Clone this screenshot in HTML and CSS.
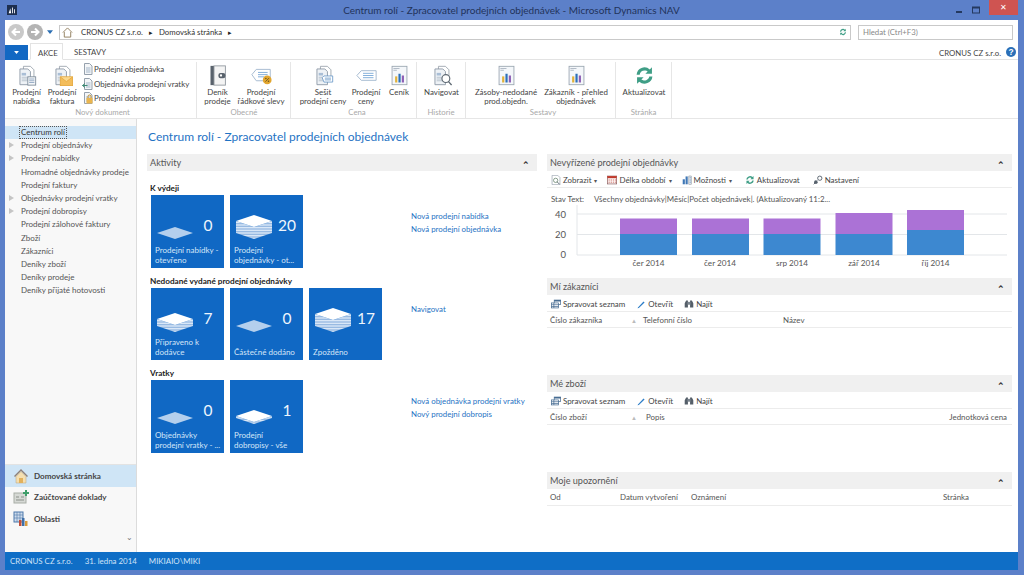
FILE: index.html
```html
<!DOCTYPE html>
<html lang="cs">
<head>
<meta charset="utf-8">
<title>Centrum rolí - Zpracovatel prodejních objednávek - Microsoft Dynamics NAV</title>
<link rel="stylesheet" href="styles.css">
</head>
<body>
<svg class="defs" aria-hidden="true">
  <defs>
    <pattern id="stripes" width="3" height="1.600" patternUnits="userSpaceOnUse">
      <rect width="3" height="1.600" fill="#e4eefa"/><rect width="3" height=".8" fill="#8db3de"/>
    </pattern>
    <symbol id="st0" viewBox="0 0 36 24"><polygon points="18,12 36,18 18,24 0,18" fill="#b4cfed"/></symbol>
    <symbol id="st2" viewBox="0 0 36 24"><polygon points="0,16 18,22 36,16 36,18 18,24 0,18" fill="url(#stripes)"/><polygon points="18,10 36,16 18,22 0,16" fill="#fff"/></symbol>
    <symbol id="st7" viewBox="0 0 36 24"><polygon points="0,11 18,17 36,11 36,18 18,24 0,18" fill="url(#stripes)"/><polygon points="18,5 36,11 18,17 0,11" fill="#fff"/></symbol>
    <symbol id="st12" viewBox="0 0 36 24"><polygon points="0,6 18,12 36,6 36,18 18,24 0,18" fill="url(#stripes)"/><polygon points="18,0 36,6 18,12 0,6" fill="#fff"/></symbol>

    <symbol id="sheets" viewBox="0 0 24 24"><path d="M8.500 1.500h8l4 4v13h-12z" fill="#fff" stroke="#9aa3ad"/><path d="M4.500 4.500h9l3 3v15h-12z" fill="#eef2f6" stroke="#8a96a3"/><path d="M6.500 9h5v3h-5z" fill="#a9bed6"/><path d="M6.500 14h8M6.500 16h8M6.500 18h8" stroke="#b5bfca"/></symbol>
    <symbol id="r-quote" viewBox="0 0 24 24"><use href="#sheets"/><rect x="13.500" y="13.500" width="9" height="9.500" fill="#f5f7f9" stroke="#7c8a99"/><path d="M15 16h6M15 18h6M15 20h6" stroke="#8fa6c0"/></symbol>
    <symbol id="r-inv" viewBox="0 0 24 24"><use href="#sheets"/><rect x="9.500" y="13.500" width="14" height="10" fill="#f3bd5b" stroke="#e6a93f"/><path d="M10 14l6.500 5 6.500-5" fill="#fbd98f" stroke="#e6a93f"/></symbol>
    <symbol id="r-book" viewBox="0 0 24 24"><rect x="4" y="1" width="4" height="22" fill="#59626c"/><rect x="8" y="1" width="13" height="22" fill="#f4f4f4" stroke="#8e959c"/><rect x="13" y="9" width="8" height="6" rx="2.500" fill="#59626c"/><circle cx="16" cy="12" r="1.300" fill="#fff"/></symbol>
    <symbol id="r-disc" viewBox="0 0 24 24"><path d="M1 11l5-6h16v13H6z" fill="#fff" stroke="#9db4cc"/><path d="M8 8.500h11M8 11h11M8 13.500h7" stroke="#75a6d6"/><circle cx="18.500" cy="17" r="5" fill="#e2a62f"/><path d="M16.500 19l4-4" stroke="#6a5520"/><circle cx="17" cy="15.500" r=".9" fill="#6a5520"/><circle cx="20" cy="18.500" r=".9" fill="#6a5520"/></symbol>
    <symbol id="r-pricesheet" viewBox="0 0 24 24"><use href="#sheets"/><path d="M10.500 14.500l2-2h10v7h-10z" fill="#fff" stroke="#6f9cc9"/><path d="M13.500 15h7M13.500 17h7" stroke="#6f9cc9"/></symbol>
    <symbol id="r-tag" viewBox="0 0 24 24"><path d="M1 12l5-5.500h17v11H6z" fill="#fff" stroke="#9db4cc"/><path d="M8 9.500h12M8 12h12M8 14.500h12" stroke="#75a6d6"/></symbol>
    <symbol id="r-chart" viewBox="0 0 24 24"><rect x="3.500" y="1.500" width="17" height="21" fill="#f4f7fa" stroke="#9ba6b1"/><path d="M5 4h7M5 6h4" stroke="#a9b4bf"/><rect x="7" y="13" width="2.500" height="7" fill="#e0b23a"/><rect x="10.800" y="10" width="2.500" height="10" fill="#2d71b8"/><rect x="14.600" y="12" width="2.500" height="8" fill="#8d5fb5"/></symbol>
    <symbol id="r-nav" viewBox="0 0 24 24"><use href="#sheets"/><circle cx="17" cy="15.500" r="4.500" fill="#fff" stroke="#5d6872" stroke-width="1.300"/><path d="M20 19l3.500 4" stroke="#5d6872" stroke-width="1.600"/></symbol>
    <symbol id="r-refresh" viewBox="0 0 24 24"><path d="M3 11a9 9 0 0 1 15-6l2.500-2.500V10h-7.500l2.600-2.600A5.800 5.800 0 0 0 6.500 11z" fill="#3f9e86"/><path d="M21 13a9 9 0 0 1-15 6l-2.500 2.500V14H11l-2.600 2.600a5.800 5.800 0 0 0 9.100-3.600z" fill="#3f9e86"/></symbol>

    <symbol id="s-doc" viewBox="0 0 12 12"><path d="M2.500.5h5l2.500 2.500v8.500h-7.500z" fill="#f4f6f8" stroke="#96a1ad"/><path d="M4 5h4.500M4 7h4.500M4 9h4.500" stroke="#a4b6c9"/></symbol>
    <symbol id="s-ret" viewBox="0 0 12 12"><use href="#s-doc"/><path d="M.5 7.500h5M3 5.500l-2.500 2 2.500 2" stroke="#3d8a74" fill="none"/></symbol>
    <symbol id="s-cred" viewBox="0 0 12 12"><use href="#s-doc"/><rect x="4.500" y="6" width="6" height="5.500" fill="#eab54e"/><path d="M6 6V4.500a1.500 1.500 0 0 1 3 0V6" fill="none" stroke="#b98a2c"/></symbol>

    <symbol id="t-view" viewBox="0 0 14 14"><path d="M1.500.5h8l3 3v10h-11z" fill="#fff" stroke="#9aa4ae"/><circle cx="6.500" cy="7.500" r="3" fill="#fff" stroke="#5d7b63"/><path d="M8.500 9.500l3.500 3.500" stroke="#5d6872" stroke-width="1.300"/></symbol>
    <symbol id="t-cal" viewBox="0 0 14 14"><rect x=".5" y="1.500" width="13" height="11" fill="#fff" stroke="#8b5d5d"/><rect x=".5" y="1.500" width="13" height="3" fill="#c0392b"/><path d="M2 7h2M5 7h2M8 7h2M11 7h2M2 10h2M5 10h2M8 10h2M11 10h2" stroke="#c0392b"/></symbol>
    <symbol id="t-opt" viewBox="0 0 14 14"><rect x="1" y="6" width="3" height="7" fill="#3f77b5"/><rect x="5" y="2" width="3" height="11" fill="#3f77b5"/><path d="M9.500 1.500h3.500v11.500H9.500z" fill="#fff" stroke="#8c98a4"/><path d="M10.500 4h2M10.500 7h2M10.500 10h2" stroke="#3f77b5"/></symbol>
    <symbol id="t-set" viewBox="0 0 14 14"><circle cx="9.500" cy="4.500" r="3" fill="#fff" stroke="#56616c" stroke-width="1.300"/><circle cx="4" cy="10" r="2.500" fill="#56616c"/><path d="M1 13l5-5" stroke="#56616c" stroke-width="1.300"/></symbol>
    <symbol id="t-list" viewBox="0 0 14 14"><rect x="4.500" y="1.500" width="9" height="6" fill="#fff" stroke="#42688f"/><rect x="4.500" y="1.500" width="9" height="2" fill="#42688f"/><rect x=".5" y="5.500" width="10" height="7" fill="#fff" stroke="#42688f"/><path d="M.5 8h10M.5 10.500h10M4 5.500v7" stroke="#42688f"/></symbol>
    <symbol id="t-edit" viewBox="0 0 14 14"><path d="M3 11.500l7.500-8 1.500 1.500-8 7.500-2 .5z" fill="#2b7cc7"/></symbol>
    <symbol id="t-find" viewBox="0 0 14 14"><path d="M1 12V6l2-4h2.500v10zM13 12V6l-2-4H8.500v10z" fill="#555f69"/><rect x="5" y="4" width="4" height="4" fill="#7b858f"/></symbol>
  </defs>
</svg>

<div class="window">
  <header class="titlebar">
    <svg class="logo" viewBox="0 0 12 12"><rect width="12" height="12" fill="#1e2f4f"/><path d="M2 10l2-6 1 6zM6 10V3l1 0v7zM8.500 10V5h1v5z" fill="#fff"/></svg>
    <div class="title-text">Centrum rolí - Zpracovatel prodejních objednávek - Microsoft Dynamics NAV</div>
    <div class="winbtns">
      <svg class="winbtn" viewBox="0 0 10 10"><rect x="2" y="6" width="6" height="2" fill="#24395f"/></svg>
      <svg class="winbtn" viewBox="0 0 10 10"><rect x="1.500" y="2" width="7" height="6" fill="none" stroke="#24395f"/><rect x="1.500" y="2" width="7" height="1.500" fill="#24395f"/></svg>
      <div class="closebtn">✕</div>
    </div>
  </header>

  <div class="shell">
    <div class="addressrow">
      <svg class="navbtn" viewBox="0 0 16 16"><circle cx="8" cy="8" r="8" fill="#c9c9c9"/><path d="M12 8H5M8 4.500L4.500 8 8 11.500" stroke="#fff" stroke-width="2" fill="none"/></svg>
      <svg class="navbtn" viewBox="0 0 16 16"><circle cx="8" cy="8" r="8" fill="#b4b4b4"/><path d="M4 8h7M8 4.500L11.500 8 8 11.500" stroke="#fff" stroke-width="2" fill="none"/></svg>
      <svg class="navdrop" viewBox="0 0 8 5"><path d="M0 0h8L4 5z" fill="#2c6fb3"/></svg>
      <div class="address">
        <svg class="homeic" viewBox="0 0 12 12"><path d="M1 6l5-5 5 5M2.500 5.500V11h7V5.500" fill="#fff" stroke="#8c7a58"/></svg>
        <span class="crumb">CRONUS CZ s.r.o.</span><span class="crumbsep">▸</span>
        <span class="crumb">Domovská stránka</span><span class="crumbsep">▸</span>
        <svg class="addr-refresh" viewBox="0 0 24 24"><use href="#r-refresh"/></svg>
      </div>
      <div class="search">Hledat (Ctrl+F3)</div>
    </div>

    <div class="tabrow">
      <div class="appmenu"><svg viewBox="0 0 8 5" class="appcaret"><path d="M0 0h8L4 5z" fill="#fff"/></svg></div>
      <div class="tab tab-on">AKCE</div>
      <div class="tab">SESTAVY</div>
      <div class="company">CRONUS CZ s.r.o.</div>
      <svg class="help" viewBox="0 0 12 12"><circle cx="6" cy="6" r="6" fill="#2a6fb8"/><text x="6" y="9.500" text-anchor="middle" class="helpq">?</text></svg>
    </div>

    <div class="ribbon">
      <section class="rgroup g1">
        <div class="rbtns">
          <div class="rbtn w35"><svg class="ric"><use href="#r-quote"/></svg><span>Prodejní<br>nabídka</span></div>
          <div class="rbtn w36"><svg class="ric"><use href="#r-inv"/></svg><span>Prodejní<br>faktura</span></div>
          <div class="rsmall">
            <div class="rs"><svg class="sic"><use href="#s-doc"/></svg>Prodejní objednávka</div>
            <div class="rs"><svg class="sic"><use href="#s-ret"/></svg>Objednávka prodejní vratky</div>
            <div class="rs"><svg class="sic"><use href="#s-cred"/></svg>Prodejní dobropis</div>
          </div>
        </div>
        <div class="rlabel">Nový dokument</div>
      </section>
      <section class="rgroup g2">
        <div class="rbtns">
          <div class="rbtn w39"><svg class="ric"><use href="#r-book"/></svg><span>Deník<br>prodeje</span></div>
          <div class="rbtn w48"><svg class="ric"><use href="#r-disc"/></svg><span>Prodejní<br>řádkové slevy</span></div>
        </div>
        <div class="rlabel">Obecné</div>
      </section>
      <section class="rgroup g3">
        <div class="rbtns">
          <div class="rbtn w50"><svg class="ric"><use href="#r-pricesheet"/></svg><span>Sešit<br>prodejní ceny</span></div>
          <div class="rbtn w36"><svg class="ric"><use href="#r-tag"/></svg><span>Prodejní<br>ceny</span></div>
          <div class="rbtn w30"><svg class="ric"><use href="#r-chart"/></svg><span>Ceník</span></div>
        </div>
        <div class="rlabel">Cena</div>
      </section>
      <section class="rgroup g4">
        <div class="rbtns">
          <div class="rbtn w49"><svg class="ric"><use href="#r-nav"/></svg><span>Navigovat</span></div>
        </div>
        <div class="rlabel">Historie</div>
      </section>
      <section class="rgroup g5">
        <div class="rbtns">
          <div class="rbtn w70"><svg class="ric"><use href="#r-chart"/></svg><span>Zásoby-nedodané<br>prod.objedn.</span></div>
          <div class="rbtn w70"><svg class="ric"><use href="#r-chart"/></svg><span>Zákazník - přehled<br>objednávek</span></div>
        </div>
        <div class="rlabel">Sestavy</div>
      </section>
      <section class="rgroup g6">
        <div class="rbtns">
          <div class="rbtn w56"><svg class="ric"><use href="#r-refresh"/></svg><span>Aktualizovat</span></div>
        </div>
        <div class="rlabel">Stránka</div>
      </section>
    </div>

    <div class="main">
      <nav class="navpane">
        <ul class="navlist">
          <li class="sel"><span class="focus">Centrum rolí</span></li>
          <li class="exp">Prodejní objednávky</li>
          <li class="exp">Prodejní nabídky</li>
          <li>Hromadné objednávky prodeje</li>
          <li>Prodejní faktury</li>
          <li class="exp">Objednávky prodejní vratky</li>
          <li class="exp">Prodejní dobropisy</li>
          <li>Prodejní zálohové faktury</li>
          <li>Zboží</li>
          <li>Zákazníci</li>
          <li>Deníky zboží</li>
          <li>Deníky prodeje</li>
          <li>Deníky přijaté hotovosti</li>
        </ul>
        <div class="navbottom">
          <div class="navbig on">
            <svg class="bigic" viewBox="0 0 16 16"><path d="M1 8l7-7 7 7-1 1-6-6-6 6z" fill="#8d7f78"/><path d="M3 8.500L8 3.500l5 5V15H3z" fill="#f5dfb0" stroke="#b9a27a" stroke-width=".5"/><rect x="6" y="10" width="4" height="5" fill="#e2b15c"/></svg>
            <span>Domovská stránka</span>
          </div>
          <div class="navbig">
            <svg class="bigic" viewBox="0 0 16 16"><rect x="1" y="4" width="12" height="10" fill="#d6d9d5" stroke="#a8ada6"/><path d="M3 8h3M8 8h3M3 11h8" stroke="#8a8f89"/><path d="M13 1v6M10 4h6" stroke="#3f9e6a" stroke-width="2"/></svg>
            <span>Zaúčtované doklady</span>
          </div>
          <div class="navbig">
            <svg class="bigic" viewBox="0 0 16 16"><rect x="1" y="1" width="9" height="10" fill="#cfdcec" stroke="#4d78ab"/><path d="M1 4h9M1 7h9M4 1v10M7 1v10" stroke="#4d78ab" stroke-width=".6"/><rect x="6" y="9" width="2.500" height="6" fill="#c0503c"/><rect x="9" y="7" width="2.500" height="8" fill="#3f6fa8"/><rect x="12" y="10" width="2.500" height="5" fill="#d99a3c"/></svg>
            <span>Oblasti</span>
          </div>
          <div class="navmore">⌄</div>
        </div>
      </nav>

      <main class="content">
        <h1 class="pagetitle">Centrum rolí - Zpracovatel prodejních objednávek</h1>
        <div class="columns">
          <div class="col-left">
            <div class="panehead">Aktivity<span class="chev">⌃</span></div>
            <div class="group g-first">
              <h2 class="gtitle">K výdeji</h2>
              <div class="grow">
                <div class="tiles">
                  <div class="tile"><div class="tile-top"><svg class="stack"><use href="#st0"/></svg><span class="num">0</span></div><div class="tlabel">Prodejní nabídky -<br>otevřeno</div></div>
                  <div class="tile"><div class="tile-top"><svg class="stack"><use href="#st12"/></svg><span class="num">20</span></div><div class="tlabel">Prodejní<br>objednávky - ot...</div></div>
                </div>
                <div class="links"><a>Nová prodejní nabídka</a><a>Nová prodejní objednávka</a></div>
              </div>
            </div>
            <div class="group">
              <h2 class="gtitle">Nedodané vydané prodejní objednávky</h2>
              <div class="grow">
                <div class="tiles">
                  <div class="tile"><div class="tile-top"><svg class="stack"><use href="#st7"/></svg><span class="num">7</span></div><div class="tlabel">Připraveno k<br>dodávce</div></div>
                  <div class="tile"><div class="tile-top"><svg class="stack"><use href="#st0"/></svg><span class="num">0</span></div><div class="tlabel">Částečné dodáno</div></div>
                  <div class="tile"><div class="tile-top"><svg class="stack"><use href="#st12"/></svg><span class="num">17</span></div><div class="tlabel">Zpožděno</div></div>
                </div>
                <div class="links"><a>Navigovat</a></div>
              </div>
            </div>
            <div class="group">
              <h2 class="gtitle">Vratky</h2>
              <div class="grow">
                <div class="tiles">
                  <div class="tile"><div class="tile-top"><svg class="stack"><use href="#st0"/></svg><span class="num">0</span></div><div class="tlabel">Objednávky<br>prodejní vratky - ...</div></div>
                  <div class="tile"><div class="tile-top"><svg class="stack"><use href="#st2"/></svg><span class="num">1</span></div><div class="tlabel">Prodejní<br>dobropisy - vše</div></div>
                </div>
                <div class="links"><a>Nová objednávka prodejní vratky</a><a>Nový prodejní dobropis</a></div>
              </div>
            </div>
          </div>

          <div class="col-right">
            <section class="pane">
              <div class="panehead">Nevyřízené prodejní objednávky<span class="chev">⌃</span></div>
              <div class="toolbar chart-tools">
                <span class="ti"><svg class="tic"><use href="#t-view"/></svg>Zobrazit<i class="dd">▾</i></span>
                <span class="ti"><svg class="tic"><use href="#t-cal"/></svg>Délka období<i class="dd">▾</i></span>
                <span class="ti"><svg class="tic"><use href="#t-opt"/></svg>Možnosti<i class="dd">▾</i></span>
                <span class="ti ti-wide"><svg class="tic"><use href="#r-refresh"/></svg>Aktualizovat</span>
                <span class="ti ti-wide"><svg class="tic"><use href="#t-set"/></svg>Nastavení</span>
              </div>
              <div class="stav"><span class="stav-k">Stav Text:</span><span>Všechny objednávky|Měsíc|Počet objednávek|. (Aktualizovaný 11:2...</span></div>
              <svg class="chart" viewBox="547 205 465 66">
                <path d="M577 214H1007M577 234.500H1007M577 255H1007M577 205V255" stroke="#e3e6e9" fill="none"/>
                <g class="bar-a"><rect x="620" y="234" width="57" height="21"/><rect x="692" y="234" width="57" height="21"/><rect x="763.500" y="234" width="57" height="21"/><rect x="835.500" y="234" width="57" height="21"/><rect x="907" y="230" width="57" height="25"/></g>
                <g class="bar-b"><rect x="620" y="218.500" width="57" height="15.500"/><rect x="692" y="218.500" width="57" height="15.500"/><rect x="763.500" y="218.500" width="57" height="15.500"/><rect x="835.500" y="213" width="57" height="21"/><rect x="907" y="210" width="57" height="20"/></g>
                <g class="axis-y"><text x="566" y="217.500">40</text><text x="566" y="237.500">20</text><text x="566" y="258">0</text></g>
                <g class="axis-x"><text x="648.500" y="265.500">čer 2014</text><text x="720" y="265.500">čer 2014</text><text x="792" y="265.500">srp 2014</text><text x="864" y="265.500">zář 2014</text><text x="935.500" y="265.500">říj 2014</text></g>
              </svg>
            </section>
            <section class="pane">
              <div class="panehead">Mí zákazníci<span class="chev">⌃</span></div>
              <div class="toolbar plain">
                <span class="ti"><svg class="tic"><use href="#t-list"/></svg>Spravovat seznam</span>
                <span class="ti"><svg class="tic"><use href="#t-edit"/></svg>Otevřít</span>
                <span class="ti"><svg class="tic"><use href="#t-find"/></svg>Najít</span>
              </div>
              <div class="thead cust"><span>Číslo zákazníka</span><span class="sort">▲</span><span>Telefonní číslo</span><span>Název</span></div>
            </section>
            <section class="pane">
              <div class="panehead">Mé zboží<span class="chev">⌃</span></div>
              <div class="toolbar plain">
                <span class="ti"><svg class="tic"><use href="#t-list"/></svg>Spravovat seznam</span>
                <span class="ti"><svg class="tic"><use href="#t-edit"/></svg>Otevřít</span>
                <span class="ti"><svg class="tic"><use href="#t-find"/></svg>Najít</span>
              </div>
              <div class="thead item"><span>Číslo zboží</span><span class="sort">▲</span><span>Popis</span><span class="right">Jednotková cena</span></div>
            </section>
            <section class="pane">
              <div class="panehead">Moje upozornění<span class="chev">⌃</span></div>
              <div class="thead notes"><span>Od</span><span>Datum vytvoření</span><span>Oznámení</span><span>Stránka</span></div>
            </section>
          </div>
        </div>
      </main>
    </div>

    <footer class="statusbar"><span>CRONUS CZ s.r.o.</span><span>31. ledna 2014</span><span>MIKIAIO\MIKI</span></footer>
  </div>
</div>
</body>
</html>
```
FILE: styles.css
```css
* { box-sizing: border-box; }
html, body { margin: 0; padding: 0; }
body {
  width: 1024px; height: 575px; overflow: hidden;
  font-family: Lato, "Open Sans", "Liberation Sans", sans-serif;
  font-size: 8px; color: #444;
  background: #5c80c9;
}
.defs { display: block; width: 0; height: 0; }
.window { display: flex; flex-direction: column; height: 575px; }

/* title bar */
.titlebar { height: 20px; display: flex; align-items: center; padding-left: 7px; background: #5c80c9; flex: none; }
.logo { width: 10px; height: 10px; flex: none; }
.title-text { flex: 1; text-align: center; font-size: 10px; color: #22335a; padding-left: 52px; }
.winbtns { display: flex; align-items: center; height: 20px; padding-right: 6px; }
.winbtn { width: 10px; height: 10px; margin-right: 7px; }
.closebtn { width: 29px; height: 15px; margin-top: -5px; margin-left: 1px; background: #cf5451; color: #fff; font-size: 8px; line-height: 15px; text-align: center; }

.shell { flex: 1; display: flex; flex-direction: column; margin: 0 6px 5px 5px; background: #fff; min-height: 0; }

/* address row */
.addressrow { height: 24px; display: flex; align-items: center; padding: 0 5px 0 3px; flex: none; }
.navbtn { width: 16px; height: 16px; margin-right: 3px; flex: none; }
.navdrop { width: 6px; height: 4px; margin-left: 1px; margin-right: 6px; flex: none; }
.address { width: 792px; height: 15px; border: 1px solid #c9c9c9; display: flex; align-items: center; padding-left: 2px; font-size: 7.8px; color: #333; }
.homeic { width: 11px; height: 11px; margin-right: 8px; }
.crumb { white-space: nowrap; }
.crumbsep { font-size: 7px; color: #222; margin: 0 6px 0 6px; }
.addr-refresh { width: 8px; height: 8px; margin-left: auto; margin-right: 3px; }
.search { width: 155px; height: 15px; margin-left: 7px; border: 1px solid #c9c9c9; color: #888; font-size: 7.8px; line-height: 13px; padding-left: 4px; }

/* tabs */
.tabrow { height: 16px; display: flex; align-items: flex-end; flex: none; border-bottom: 1px solid #e3e3e3; }
.appmenu { width: 23px; height: 15px; margin-bottom: -1px; background: #1268c3; display: flex; align-items: center; justify-content: center; }
.appcaret { width: 5px; height: 3px; }
.tab { height: 16px; padding: 0 11px; font-size: 7.8px; line-height: 18px; color: #444; }
.tab-on { margin-left: 2px; padding: 0 7px; width: 33px; background: #fff; border: 1px solid #e3e3e3; border-bottom: 1px solid #fff; margin-bottom: -1px; height: 17px; white-space: nowrap; }
.company { margin-left: auto; font-size: 7.8px; color: #444; line-height: 14px; padding-top: 3px; align-self: center; }
.help { width: 10px; height: 10px; margin: 1px 2px 0 5px; align-self: center; }
.helpq { font: bold 10px "Liberation Sans", sans-serif; fill: #fff; }

/* ribbon */
.ribbon { height: 59px; display: flex; flex: none; border-bottom: 1px solid #e6e6e6; }
.rgroup { display: flex; flex-direction: column; padding-top: 3px; height: 56px; margin-top: 2px; border-right: 1px solid #e6e6e6; }
.rbtns { display: flex; flex: 1; min-height: 0; }
.rlabel { text-align: center; color: #a9a9a9; font-size: 7.8px; line-height: 10px; height: 11px; flex: none; }
.g1 { width: 192px; padding-left: 4px; }
.g2 { width: 94px; padding-left: 1px; }
.g3 { width: 126px; padding-left: 7px; }
.g4 { width: 49px; }
.g5 { width: 150px; padding-left: 5px; }
.g6 { width: 56px; }
.rbtn { display: flex; flex-direction: column; align-items: center; text-align: center; line-height: 9px; font-size: 7.9px; color: #444; flex: none; }
.rbtn span { margin-top: 2px; display: block; white-space: nowrap; }
.ric { width: 21px; height: 21px; flex: none; }
.w30 { width: 30px; } .w35 { width: 35px; } .w36 { width: 36px; } .w39 { width: 39px; } .w48 { width: 48px; }
.w49 { width: 49px; } .w50 { width: 50px; } .w56 { width: 56px; } .w70 { width: 70px; }
.rsmall { display: flex; flex-direction: column; margin-left: 2px; margin-top: -3px; }
.rs { height: 14.500px; display: flex; align-items: center; white-space: nowrap; font-size: 7.9px; }
.sic { width: 12px; height: 12px; flex: none; }

/* main area */
.main { flex: 1; display: grid; grid-template-columns: 132px 1fr; min-height: 0; }
.navpane { background: #f8f8f8; border-right: 1px solid #dcdcdc; display: flex; flex-direction: column; padding-top: 7px; }
.navlist { list-style: none; margin: 0; padding: 0; flex: 1; }
.navlist li { position: relative; height: 13.200px; line-height: 13px; padding-left: 16px; white-space: nowrap; color: #555; font-size: 8px; }
.navlist li.sel { background: #cfe5f6; color: #333; padding-left: 14px; }
.focus { display: inline-block; border: 1px dotted #555; padding: 0 1px; height: 13px; line-height: 11px; }
.exp::before { content: ""; position: absolute; left: 4px; top: 3px; border-left: 5px solid #c5c5c5; border-top: 3px solid transparent; border-bottom: 3px solid transparent; }
.navbottom { height: 88px; border-top: 1px solid #e3e3e3; }
.navbig { height: 21.500px; display: flex; align-items: center; padding-left: 8px; font-weight: 700; font-size: 8.1px; color: #444; }
.navbig.on { background: #cfe5f6; }
.bigic { width: 16px; height: 16px; margin-right: 5px; flex: none; }
.navmore { text-align: right; padding-right: 3px; padding-top: 2px; font-size: 8px; line-height: 10px; color: #777; }

/* content */
.content { padding: 0 6px 0 10px; min-width: 0; }
.pagetitle { margin: 0; height: 35px; padding-top: 9px; padding-left: 1px; font-size: 12px; line-height: 18px; font-weight: 400; color: #1f73c4; }
.columns { display: grid; grid-template-columns: 390px 465px; column-gap: 10px; }
.panehead { height: 17px; background: #f0f0f0; display: flex; justify-content: space-between; padding: 0 7px 0 3px; font-size: 9.1px; line-height: 17px; color: #555; }
.chev { font-size: 9px; font-weight: 700; color: #333; line-height: 21px; }
.group { padding-left: 3px; margin-top: 6px; }
.g-first { margin-top: 10px; }
.gtitle { margin: 0; font-size: 8.2px; font-weight: 700; color: #222; line-height: 14px; height: 14px; }
.grow { display: flex; }
.tiles { display: flex; gap: 6px; width: 260px; flex: none; margin-left: 1px; }
.tile { width: 73px; height: 72.500px; background: #1068c4; display: flex; flex-direction: column; justify-content: space-between; padding-bottom: 3px; color: #d5e6f8; }
.tile-top { height: 44px; display: flex; flex: none; }
.stack { width: 36px; height: 24px; margin: 20px 0 0 6px; flex: none; }
.num { width: 32px; margin-left: -1px; text-align: center; font-size: 15.5px; font-weight: 400; line-height: 26px; margin-top: 17px; color: #eef5fd; }
.tlabel { padding-left: 4px; font-size: 8px; line-height: 10px; white-space: nowrap; }
.links { display: flex; flex-direction: column; padding-top: 15px; }
.links a { color: #1f73c4; line-height: 13px; font-size: 7.9px; white-space: nowrap; }

.col-right { display: grid; grid-template-rows: 124px 97px 97px auto; }
.pane { min-width: 0; }
.toolbar { height: 17px; display: flex; align-items: center; border-bottom: 1px solid #ececec; padding: 2px 0 0 4px; gap: 11px; font-size: 7.9px; color: #444; }
.chart-tools { gap: 10px; }
.ti { display: inline-flex; align-items: center; white-space: nowrap; }
.ti-wide { margin-left: 3px; }
.tic { width: 10px; height: 10px; margin-right: 2px; flex: none; }
.dd { font-style: normal; font-size: 6px; margin-left: 3px; color: #555; }
.stav { display: flex; padding: 5px 0 0 4px; line-height: 12px; height: 17px; font-size: 7.9px; color: #555; white-space: nowrap; }
.stav-k { width: 43px; }
.chart { display: block; width: 465px; height: 66px; }
.bar-a rect { fill: #3d88d0; }
.bar-b rect { fill: #ab72d6; }
.axis-y text { text-anchor: end; font-size: 9.5px; fill: #555; }
.axis-x text { text-anchor: middle; font-size: 8.2px; fill: #555; }
.thead { display: grid; height: 16px; align-items: center; padding: 1px 5px 0 3px; border-bottom: 1px solid #ececec; font-size: 7.9px; color: #555; white-space: nowrap; }
.thead.cust { grid-template-columns: 79px 14px 140px 1fr; }
.thead.item { grid-template-columns: 79px 17px 1fr auto; }
.thead.notes { grid-template-columns: 70px 71px 252px 1fr; height: 17px; padding-top: 0; }
.sort { font-size: 6px; color: #bbb; margin-left: 2px; }
.right { text-align: right; }

/* status bar */
.statusbar { height: 18px; flex: none; background: #0f6ec6; display: flex; align-items: center; gap: 12px; padding-left: 5px; font-size: 7.9px; color: #cfe3f8; }
```
